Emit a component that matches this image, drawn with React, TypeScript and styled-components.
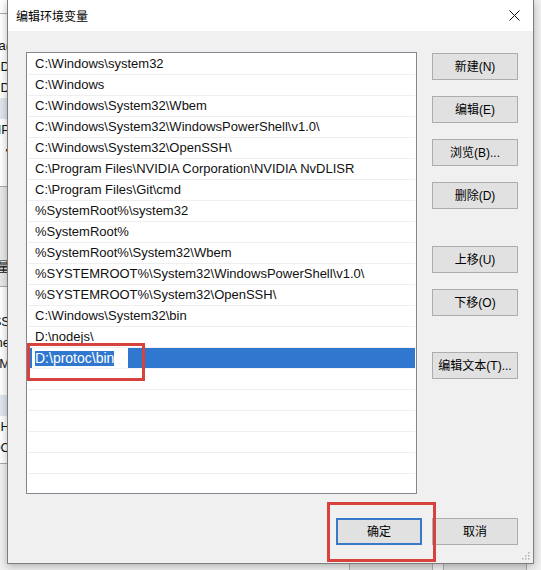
import React from "react";
import styled, { createGlobalStyle } from "styled-components";

const FONT = `"Liberation Sans", "Noto Sans CJK SC", sans-serif`;

const GlobalStyle = createGlobalStyle`
  html, body { margin: 0; padding: 0; }
  body {
    width: 541px;
    height: 570px;
    overflow: hidden;
    background: #f0f0f0;
    font-family: ${FONT};
    font-size: 12px;
    color: #000;
  }
`;

/* ---------- desktop & background window ---------- */

const Desktop = styled.div`
  position: relative;
  width: 541px;
  height: 570px;
  overflow: hidden;
  display: flex;
  background: #f0f0f0;
`;

const BgSidebar = styled.div`
  width: 10px;
  flex: none;
  display: flex;
  flex-direction: column;
`;

const BgSection = styled.div<{ $h: number; $bg: string; $pt?: number; $line?: boolean }>`
  height: ${(p) => p.$h}px;
  flex: none;
  background: ${(p) => p.$bg};
  padding-top: ${(p) => p.$pt ?? 0}px;
  box-sizing: border-box;
  border-bottom: ${(p) => (p.$line ? "1px solid #a9a9a9" : "none")};
  display: flex;
  flex-direction: column;
`;

const BgLine = styled.div<{ $hl?: boolean }>`
  height: 21px;
  line-height: 21px;
  display: flex;
  justify-content: flex-end;
  white-space: nowrap;
  font-size: 13px;
  color: #111;
  background: ${(p) => (p.$hl ? "#dfe6ee" : "transparent")};
`;

const BgMain = styled.div`
  flex: 1;
  display: flex;
  flex-direction: column;
  justify-content: flex-end;
`;

const BgFooter = styled.div`
  display: flex;
  justify-content: flex-end;
  gap: 10px;
  padding-right: 14px;
  margin-bottom: -12px;
`;

const BgButton = styled.div`
  width: 84px;
  height: 32px;
  box-sizing: border-box;
  border: 1px solid #adadad;
  background: #e1e1e1;
`;

/* ---------- dialog ---------- */

const Dialog = styled.div`
  position: absolute;
  left: 7px;
  top: 0;
  width: 527px;
  height: 564px;
  box-sizing: border-box;
  border: 1px solid #7d7d7d;
  border-top: none;
  background: #f0f0f0;
  box-shadow: 0 2px 8px rgba(0, 0, 0, 0.28);
  display: flex;
  flex-direction: column;
`;

const TitleBar = styled.div`
  height: 31px;
  flex: none;
  background: #fff;
  display: flex;
  align-items: center;
  justify-content: space-between;
  padding-left: 8px;
  padding-right: 4px;
`;

const Title = styled.span`
  font-size: 12px;
  line-height: 16px;
  color: #000;
  font-family: "Noto Sans CJK SC", sans-serif;
`;

const CloseButton = styled.div`
  width: 30px;
  height: 30px;
  display: flex;
  align-items: center;
  justify-content: center;
`;

const Body = styled.div`
  flex: 1;
  display: flex;
  flex-direction: column;
  padding: 21px 15px 0 18px;
`;

const Main = styled.div`
  display: flex;
  gap: 15px;
`;

const ListBox = styled.div`
  width: 392px;
  height: 442px;
  box-sizing: border-box;
  border: 1px solid #828790;
  background: #fff;
  padding: 1px 1px 0 1px;
  overflow: hidden;
  display: flex;
  flex-direction: column;
`;

const Row = styled.div<{ $selected?: boolean }>`
  height: 21px;
  flex: none;
  box-sizing: border-box;
  border-bottom: 1px solid ${(p) => (p.$selected ? "#f4f4f4" : "#efefef")};
  background: ${(p) => (p.$selected ? "#3078cf" : "#fff")};
  padding-left: 7px;
  line-height: 20px;
  font-size: 13px;
  color: #111;
  white-space: nowrap;
  display: flex;
  align-items: center;
`;

const EditBox = styled.div`
  margin-left: -3px;
  width: 96px;
  height: 20px;
  box-sizing: border-box;
  background: #fff;
  padding-left: 3px;
  display: flex;
  align-items: center;
`;

const SelectedText = styled.span`
  background: #3078cf;
  color: #fff;
  font-size: 14px;
  line-height: 15px;
  height: 15px;
  display: inline-block;
`;

const ButtonColumn = styled.div`
  display: flex;
  flex-direction: column;
  padding-top: 1px;
`;

const ButtonGroup = styled.div<{ $mt?: number }>`
  display: flex;
  flex-direction: column;
  gap: 16px;
  margin-top: ${(p) => p.$mt ?? 0}px;
`;

const WinButton = styled.div<{ $default?: boolean }>`
  width: 86px;
  height: 27px;
  box-sizing: border-box;
  border: ${(p) => (p.$default ? "2px solid #3a78c8" : "1px solid #adadad")};
  background: #e1e1e1;
  display: flex;
  align-items: center;
  justify-content: center;
  font-size: 12px;
  line-height: 16px;
  color: #000;
  white-space: nowrap;
`;

const Footer = styled.div`
  display: flex;
  justify-content: flex-end;
  gap: 10px;
  margin-top: 24px;
`;

const Grip = styled.svg`
  position: absolute;
  right: 3px;
  bottom: 3px;
`;

const Annotation = styled.div<{ $x: number; $y: number; $w: number; $h: number }>`
  position: absolute;
  left: ${(p) => p.$x}px;
  top: ${(p) => p.$y}px;
  width: ${(p) => p.$w}px;
  height: ${(p) => p.$h}px;
  box-sizing: border-box;
  border: 3px solid #d8423d;
  pointer-events: none;
`;

const paths = [
  "C:\\Windows\\system32",
  "C:\\Windows",
  "C:\\Windows\\System32\\Wbem",
  "C:\\Windows\\System32\\WindowsPowerShell\\v1.0\\",
  "C:\\Windows\\System32\\OpenSSH\\",
  "C:\\Program Files\\NVIDIA Corporation\\NVIDIA NvDLISR",
  "C:\\Program Files\\Git\\cmd",
  "%SystemRoot%\\system32",
  "%SystemRoot%",
  "%SystemRoot%\\System32\\Wbem",
  "%SYSTEMROOT%\\System32\\WindowsPowerShell\\v1.0\\",
  "%SYSTEMROOT%\\System32\\OpenSSH\\",
  "C:\\Windows\\System32\\bin",
  "D:\\nodejs\\",
];

const emptyRows = Array.from({ length: 7 });

export default function App() {
  return (
    <>
      <GlobalStyle />
      <Desktop>
        <BgSidebar>
          <BgSection $h={14} $bg="#fff" $line />
          <BgSection $h={173} $bg="#fff" $pt={21} $line>
            <BgLine>Java(</BgLine>
            <BgLine>ID</BgLine>
            <BgLine>ID</BgLine>
            <BgLine $hl>·</BgLine>
            <BgLine>IP</BgLine>
            <BgLine>•</BgLine>
          </BgSection>
          <BgSection $h={100} $bg="#e9e9e9" $pt={69} $line>
            <BgLine>环境变量</BgLine>
          </BgSection>
          <BgSection $h={177} $bg="#fff" $pt={24} $line>
            <BgLine>OpenSS</BgLine>
            <BgLine>ne</BgLine>
            <BgLine>NM</BgLine>
            <BgLine />
            <BgLine $hl />
            <BgLine>JH</BgLine>
            <BgLine>OC</BgLine>
          </BgSection>
        </BgSidebar>
        <BgMain>
          <BgFooter>
            <BgButton />
            <BgButton />
          </BgFooter>
        </BgMain>

        <Dialog>
          <TitleBar>
            <Title>编辑环境变量</Title>
            <CloseButton>
              <svg width="11" height="11" viewBox="0 0 11 11">
                <path d="M0.5 0.5 L10.5 10.5 M10.5 0.5 L0.5 10.5" stroke="#111" strokeWidth="1" />
              </svg>
            </CloseButton>
          </TitleBar>
          <Body>
            <Main>
              <ListBox>
                {paths.map((p) => (
                  <Row key={p}>{p}</Row>
                ))}
                <Row $selected>
                  <EditBox>
                    <SelectedText>D:\protoc\bin</SelectedText>
                  </EditBox>
                </Row>
                {emptyRows.map((_, i) => (
                  <Row key={`e${i}`} />
                ))}
              </ListBox>
              <ButtonColumn>
                <ButtonGroup>
                  <WinButton>新建(N)</WinButton>
                  <WinButton>编辑(E)</WinButton>
                  <WinButton>浏览(B)...</WinButton>
                  <WinButton>删除(D)</WinButton>
                </ButtonGroup>
                <ButtonGroup $mt={37}>
                  <WinButton>上移(U)</WinButton>
                  <WinButton>下移(O)</WinButton>
                </ButtonGroup>
                <ButtonGroup $mt={36}>
                  <WinButton>编辑文本(T)...</WinButton>
                </ButtonGroup>
              </ButtonColumn>
            </Main>
            <Footer>
              <WinButton $default>确定</WinButton>
              <WinButton>取消</WinButton>
            </Footer>
          </Body>
          <Grip width="10" height="10" viewBox="0 0 10 10">
            {[
              [8, 2],
              [8, 5],
              [5, 5],
              [8, 8],
              [5, 8],
              [2, 8],
            ].map(([x, y]) => (
              <rect key={`${x}-${y}`} x={x} y={y} width="1.5" height="1.5" fill="#b4b4b4" />
            ))}
          </Grip>
        </Dialog>

        <Annotation $x={27} $y={343} $w={118} $h={38} />
        <Annotation $x={327} $y={502} $w={109} $h={60} />
      </Desktop>
    </>
  );
}
